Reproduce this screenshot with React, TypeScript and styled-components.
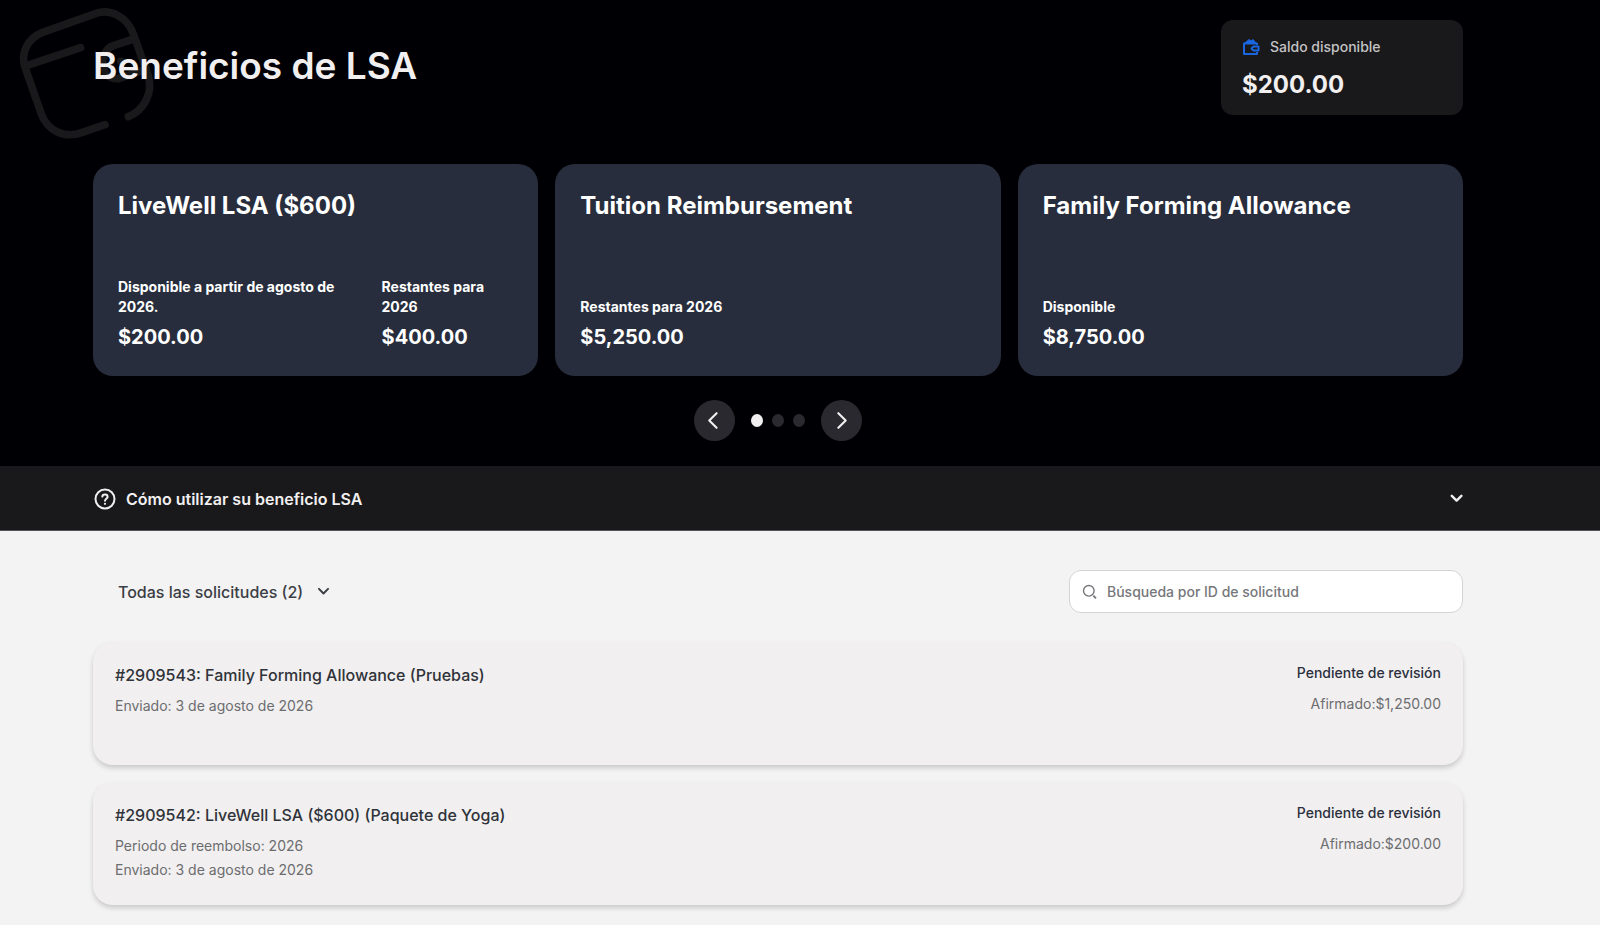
import React from "react";
import styled, { createGlobalStyle } from "styled-components";

const GlobalStyle = createGlobalStyle`
  *, *::before, *::after { box-sizing: border-box; }
  body { margin: 0; background: #f3f3f3; font-family: Inter, "Liberation Sans", sans-serif; }
  h1, h2, h3, p, dl, dd, ul { margin: 0; padding: 0; }
  button, input, select { font-family: inherit; }
`;

const Hero = styled.header`
  position: relative;
  background: #000004;
  color: #f1eff0;
  padding: 20px 137px 25px 93px;
`;

const Watermark = styled.svg`
  position: absolute;
  top: 0;
  left: 0;
`;

const HeroTop = styled.div`
  position: relative;
  display: flex;
  justify-content: space-between;
  align-items: flex-start;
`;

const PageTitle = styled.h1`
  padding-top: 22px;
  font-size: 37px;
  line-height: 48px;
  font-weight: 600;
`;

const Balance = styled.section`
  width: 242px;
  padding: 16px 21px 14px;
  border-radius: 12px;
  background: #19191b;
`;

const BalanceLabel = styled.p`
  display: flex;
  align-items: center;
  gap: 10px;
  font-size: 14px;
  line-height: 22px;
  color: #c4c3c5;
  font-weight: 500;
`;

const BalanceAmount = styled.p`
  margin-top: 11px;
  font-size: 24px;
  line-height: 32px;
  font-weight: 700;
`;

const Benefits = styled.ul`
  display: grid;
  grid-template-columns: repeat(3, 1fr);
  gap: 17px;
  margin-top: 49px;
  list-style: none;
`;

const BenefitCard = styled.li`
  display: flex;
  flex-direction: column;
  justify-content: space-between;
  min-height: 212px;
  padding: 26px 25px 25px;
  border-radius: 20px;
  background: #272d3c;
  color: #ffffff;
`;

const BenefitName = styled.h2`
  font-size: 24px;
  line-height: 32px;
  font-weight: 700;
`;

const Figures = styled.dl`
  display: grid;
  grid-template-columns: 2fr 1fr;
  align-items: end;
`;

const Figure = styled.div`
  padding-right: 16px;
`;

const FigureLabel = styled.dt`
  font-size: 14px;
  line-height: 20px;
  font-weight: 700;
`;

const FigureAmount = styled.dd`
  margin-top: 6px;
  font-size: 20px;
  line-height: 28px;
  font-weight: 700;
`;

const Pager = styled.nav`
  display: flex;
  justify-content: center;
  align-items: center;
  gap: 16px;
  margin-top: 24px;
`;

const PagerButton = styled.button`
  display: grid;
  place-items: center;
  width: 41px;
  height: 41px;
  padding: 0;
  border: 0;
  border-radius: 50%;
  background: #29292f;
  color: #f1eff0;
`;

const Dots = styled.div`
  display: flex;
  gap: 9px;
`;

const Dot = styled.button<{ $active?: boolean }>`
  width: 12px;
  height: 13px;
  padding: 0;
  border: 0;
  border-radius: 50%;
  background: ${(p) => (p.$active ? "#f1eff0" : "#29292f")};
`;

const HelpToggle = styled.button`
  display: flex;
  align-items: center;
  gap: 10px;
  width: 100%;
  height: 65px;
  padding: 1px 137px 0 94px;
  border: 0;
  border-bottom: 1px solid #55505a;
  background: #19191b;
  color: #f1eff0;
  font-size: 16px;
  line-height: 24px;
  font-weight: 600;
  text-align: left;
`;

const HelpText = styled.span`
  flex: 1;
`;

const Main = styled.main`
  padding: 39px 137px 20px 93px;
`;

const Toolbar = styled.div`
  display: flex;
  justify-content: space-between;
  align-items: center;
`;

const FilterWrap = styled.label`
  display: flex;
  align-items: center;
  gap: 14px;
  padding-left: 25px;
  color: #3b3e45;
`;

const FilterSelect = styled.select`
  appearance: none;
  field-sizing: content;
  padding: 0;
  border: 0;
  background: transparent;
  color: inherit;
  font-size: 16px;
  line-height: 24px;
  font-weight: 500;
`;

const SearchBox = styled.label`
  display: flex;
  align-items: center;
  gap: 9px;
  width: 394px;
  height: 43px;
  padding: 0 12px;
  border: 1px solid #d4d4d6;
  border-radius: 12px;
  background: #ffffff;
  color: #76777b;
`;

const SearchInput = styled.input`
  flex: 1;
  min-width: 0;
  padding: 0;
  border: 0;
  outline: 0;
  background: transparent;
  color: #3b3e45;
  font-size: 14px;
  line-height: 20px;
  font-weight: 500;
  &::placeholder { color: #76777b; opacity: 1; }
`;

const Requests = styled.ul`
  display: flex;
  flex-direction: column;
  gap: 17px;
  margin-top: 29px;
  list-style: none;
`;

const RequestCard = styled.li`
  display: flex;
  justify-content: space-between;
  min-height: 123px;
  padding: 21px 22px;
  border-radius: 20px;
  background: #f1eff0;
  box-shadow: 0 3px 5px rgba(0, 0, 0, 0.17);
`;

const RequestName = styled.h3`
  margin-bottom: 7px;
  font-size: 16px;
  line-height: 24px;
  font-weight: 500;
  color: #2f3339;
`;

const Detail = styled.p`
  font-size: 14px;
  line-height: 24px;
  font-weight: 400;
  color: #6c6d6f;
`;

const Outcome = styled.div`
  text-align: right;
`;

const Status = styled.p`
  margin-bottom: 9px;
  font-size: 14px;
  line-height: 20px;
  font-weight: 500;
  color: #2b2f3d;
`;

const Chevron = ({ d, size, width }: { d: string; size: number; width: number }) => (
  <svg width={size} height={size} viewBox="0 0 20 20" fill="none" stroke="currentColor" strokeWidth={width} strokeLinecap="round" strokeLinejoin="round" aria-hidden="true">
    <path d={d} />
  </svg>
);

const benefits = [
  {
    name: "LiveWell LSA ($600)",
    figures: [
      { label: "Disponible a partir de agosto de 2026.", amount: "$200.00" },
      { label: "Restantes para 2026", amount: "$400.00" },
    ],
  },
  { name: "Tuition Reimbursement", figures: [{ label: "Restantes para 2026", amount: "$5,250.00" }] },
  { name: "Family Forming Allowance", figures: [{ label: "Disponible", amount: "$8,750.00" }] },
];

const requests = [
  {
    name: "#2909543: Family Forming Allowance (Pruebas)",
    details: ["Enviado: 3 de agosto de 2026"],
    claimed: "$1,250.00",
  },
  {
    name: "#2909542: LiveWell LSA ($600) (Paquete de Yoga)",
    details: ["Periodo de reembolso: 2026", "Enviado: 3 de agosto de 2026"],
    claimed: "$200.00",
  },
];

export default function App() {
  return (
    <>
      <GlobalStyle />
      <Hero>
        <Watermark width="160" height="150" viewBox="0 0 480 450" fill="none" stroke="#19191b" strokeWidth="23" strokeLinecap="round" aria-hidden="true">
          <path d="M315 374 L245 398 C190 417 142 390 124 342 L76 205 C60 160 82 115 128 97 L280 43 C330 22 382 50 401 104 L445 228 C460 278 432 332 385 350" />
          <path d="M82 196 L242 143" />
          <path d="M401 117 L340 137 C292 155 298 240 355 236 L438 208" />
          <path d="M362 184 L364 184" />
        </Watermark>
        <HeroTop>
          <PageTitle>Beneficios de LSA</PageTitle>
          <Balance>
            <BalanceLabel>
              <svg width="18" height="18" viewBox="0 0 18 18" fill="none" stroke="#1a66e0" strokeWidth="2" strokeLinejoin="round" aria-hidden="true">
                <path d="M15 7 V5.500 H2 V16 H15 V14" />
                <path d="M3 5 L7 1.500 L9 3 L11 1.500 L14 5 Z" fill="#1a66e0" strokeWidth="1" />
                <path d="M16.500 8.500 H11.500 L9.500 10.500 L11.500 12.500 H16.500 Z" />
              </svg>
              Saldo disponible
            </BalanceLabel>
            <BalanceAmount>$200.00</BalanceAmount>
          </Balance>
        </HeroTop>
        <Benefits>
          {benefits.map((b) => (
            <BenefitCard key={b.name}>
              <BenefitName>{b.name}</BenefitName>
              <Figures>
                {b.figures.map((f) => (
                  <Figure key={f.label}>
                    <FigureLabel>{f.label}</FigureLabel>
                    <FigureAmount>{f.amount}</FigureAmount>
                  </Figure>
                ))}
              </Figures>
            </BenefitCard>
          ))}
        </Benefits>
        <Pager aria-label="Beneficios">
          <PagerButton aria-label="Anterior"><Chevron d="M12 3 L5 10 L12 17" size={21} width={2} /></PagerButton>
          <Dots>
            <Dot $active aria-label="Página 1" />
            <Dot aria-label="Página 2" />
            <Dot aria-label="Página 3" />
          </Dots>
          <PagerButton aria-label="Siguiente"><Chevron d="M7 3 L14 10 L7 17" size={21} width={2} /></PagerButton>
        </Pager>
      </Hero>
      <HelpToggle aria-expanded={false}>
        <svg width="22" height="22" viewBox="0 0 22 22" fill="none" stroke="currentColor" strokeWidth="2" strokeLinecap="round" aria-hidden="true">
          <circle cx="11" cy="11" r="9.500" />
          <path d="M8.300 8.600 C8.500 5.600 13.600 5.700 13.600 8.700 C13.600 10.700 11 10.700 11 12.800" />
          <circle cx="11" cy="15.800" r="0.500" strokeWidth="1.200" />
        </svg>
        <HelpText>Cómo utilizar su beneficio LSA</HelpText>
        <Chevron d="M6 6 L12 12 L18 6" size={16} width={3} />
      </HelpToggle>
      <Main>
        <Toolbar>
          <FilterWrap>
            <FilterSelect aria-label="Filtrar solicitudes">
              <option>Todas las solicitudes (2)</option>
            </FilterSelect>
            <Chevron d="M3 6 L10 13 L17 6" size={13} width={3} />
          </FilterWrap>
          <SearchBox>
            <svg width="16" height="16" viewBox="0 0 16 16" fill="none" stroke="currentColor" strokeWidth="1.400" aria-hidden="true">
              <circle cx="6.800" cy="6.800" r="5.300" />
              <path d="M11.400 11.600 L14 14.400" strokeWidth="1.800" />
            </svg>
            <SearchInput type="search" aria-label="Búsqueda por ID de solicitud" placeholder="Búsqueda por ID de solicitud" />
          </SearchBox>
        </Toolbar>
        <Requests>
          {requests.map((r) => (
            <RequestCard key={r.name}>
              <div>
                <RequestName>{r.name}</RequestName>
                {r.details.map((d) => (
                  <Detail key={d}>{d}</Detail>
                ))}
              </div>
              <Outcome>
                <Status>Pendiente de revisión</Status>
                <Detail>Afirmado:{r.claimed}</Detail>
              </Outcome>
            </RequestCard>
          ))}
        </Requests>
      </Main>
    </>
  );
}
